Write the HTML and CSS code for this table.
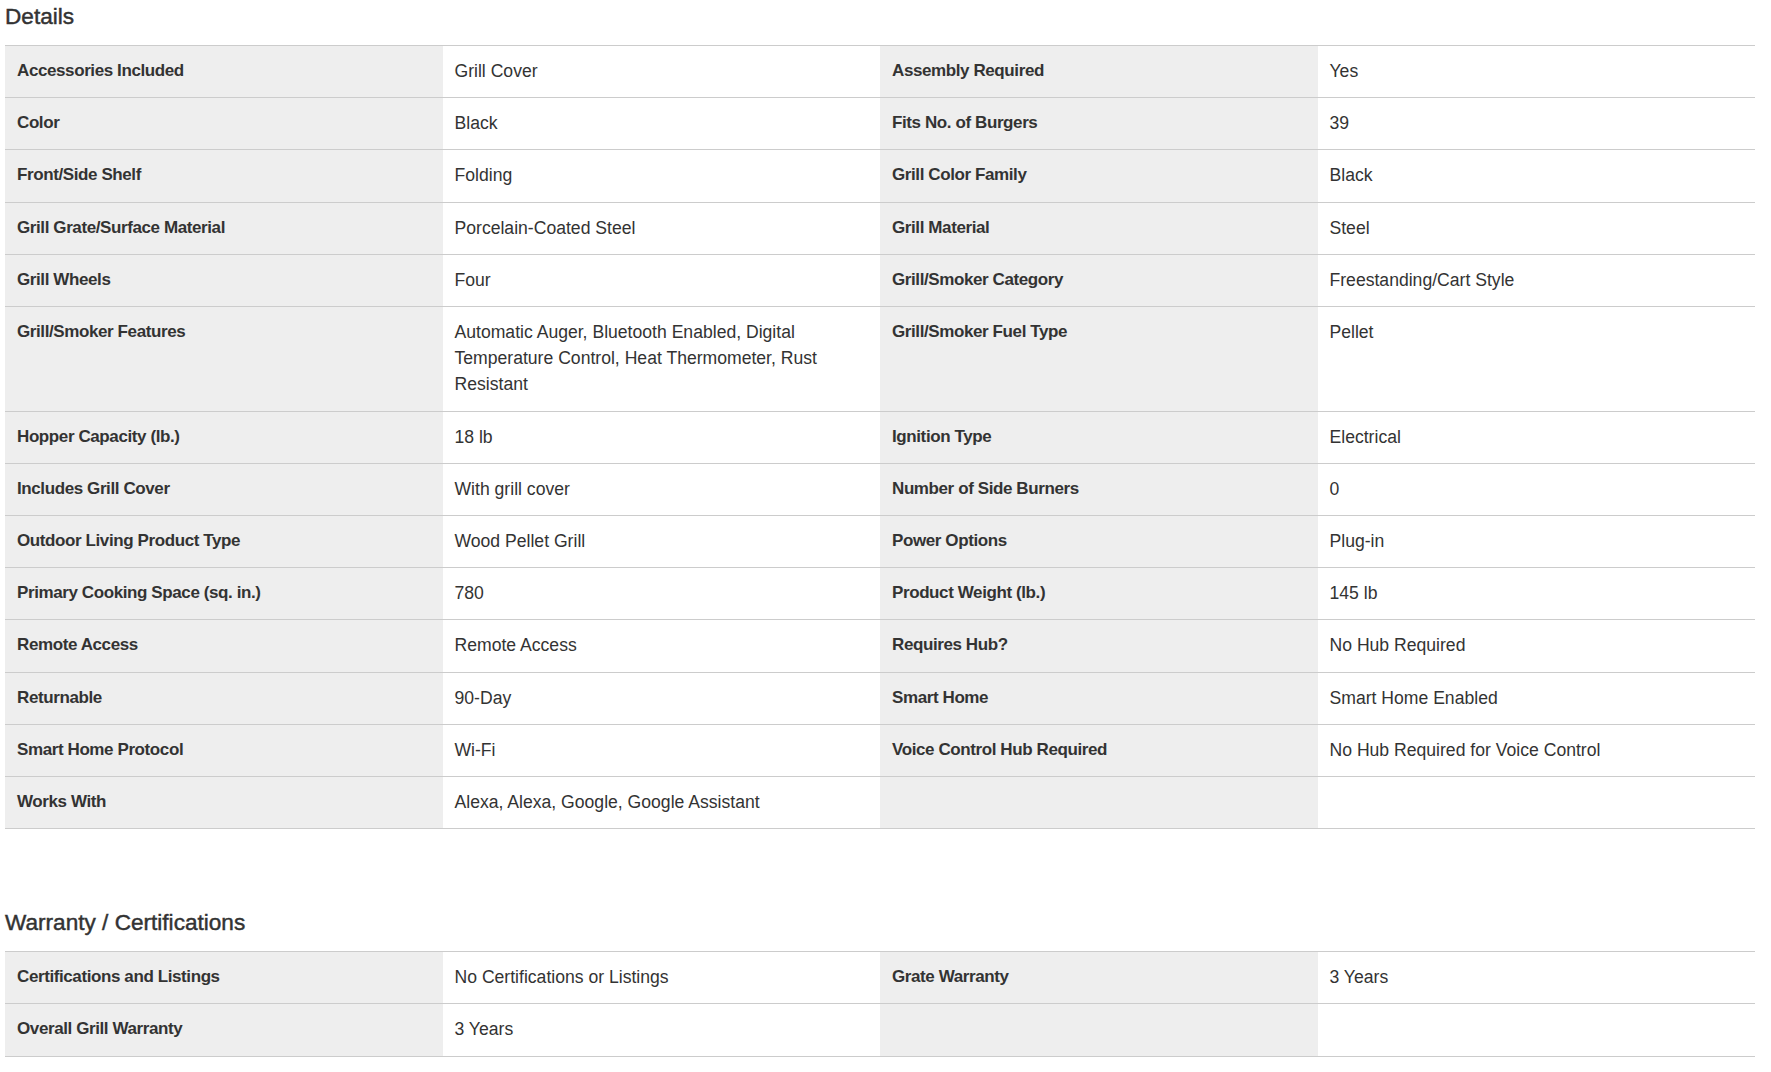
FILE: index.html
```html
<!DOCTYPE html>
<html lang="en">
<head>
<meta charset="utf-8">
<title>Specifications</title>
<link rel="stylesheet" href="styles.css">
</head>
<body>
<div class="page">
  <section class="section">
    <h2 class="section-title">Details</h2>
    <div class="spec-grid">
      <div class="spec-label">Accessories Included</div><div class="spec-value">Grill Cover</div>
      <div class="spec-label">Assembly Required</div><div class="spec-value">Yes</div>
      <div class="spec-label">Color</div><div class="spec-value">Black</div>
      <div class="spec-label">Fits No. of Burgers</div><div class="spec-value">39</div>
      <div class="spec-label">Front/Side Shelf</div><div class="spec-value">Folding</div>
      <div class="spec-label">Grill Color Family</div><div class="spec-value">Black</div>
      <div class="spec-label">Grill Grate/Surface Material</div><div class="spec-value">Porcelain-Coated Steel</div>
      <div class="spec-label">Grill Material</div><div class="spec-value">Steel</div>
      <div class="spec-label">Grill Wheels</div><div class="spec-value">Four</div>
      <div class="spec-label">Grill/Smoker Category</div><div class="spec-value">Freestanding/Cart Style</div>
      <div class="spec-label">Grill/Smoker Features</div><div class="spec-value">Automatic Auger, Bluetooth Enabled, Digital Temperature Control, Heat Thermometer, Rust Resistant</div>
      <div class="spec-label">Grill/Smoker Fuel Type</div><div class="spec-value">Pellet</div>
      <div class="spec-label">Hopper Capacity (lb.)</div><div class="spec-value">18 lb</div>
      <div class="spec-label">Ignition Type</div><div class="spec-value">Electrical</div>
      <div class="spec-label">Includes Grill Cover</div><div class="spec-value">With grill cover</div>
      <div class="spec-label">Number of Side Burners</div><div class="spec-value">0</div>
      <div class="spec-label">Outdoor Living Product Type</div><div class="spec-value">Wood Pellet Grill</div>
      <div class="spec-label">Power Options</div><div class="spec-value">Plug-in</div>
      <div class="spec-label">Primary Cooking Space (sq. in.)</div><div class="spec-value">780</div>
      <div class="spec-label">Product Weight (lb.)</div><div class="spec-value">145 lb</div>
      <div class="spec-label">Remote Access</div><div class="spec-value">Remote Access</div>
      <div class="spec-label">Requires Hub?</div><div class="spec-value">No Hub Required</div>
      <div class="spec-label">Returnable</div><div class="spec-value">90-Day</div>
      <div class="spec-label">Smart Home</div><div class="spec-value">Smart Home Enabled</div>
      <div class="spec-label">Smart Home Protocol</div><div class="spec-value">Wi-Fi</div>
      <div class="spec-label">Voice Control Hub Required</div><div class="spec-value">No Hub Required for Voice Control</div>
      <div class="spec-label">Works With</div><div class="spec-value">Alexa, Alexa, Google, Google Assistant</div>
      <div class="spec-label"></div><div class="spec-value"></div>
    </div>
  </section>
  <section class="section">
    <h2 class="section-title">Warranty / Certifications</h2>
    <div class="spec-grid">
      <div class="spec-label">Certifications and Listings</div><div class="spec-value">No Certifications or Listings</div>
      <div class="spec-label">Grate Warranty</div><div class="spec-value">3 Years</div>
      <div class="spec-label">Overall Grill Warranty</div><div class="spec-value">3 Years</div>
      <div class="spec-label"></div><div class="spec-value"></div>
    </div>
  </section>
</div>
</body>
</html>
```

FILE: styles.css
```css
html, body {
  margin: 0;
  padding: 0;
  background: #ffffff;
}

body {
  font-family: "Liberation Sans", Arial, Helvetica, sans-serif;
  color: #333333;
}

.page {
  padding: 0 16px 0 5px;
}

.section + .section {
  margin-top: 77px;
}

.section-title {
  margin: 0;
  padding: 0 0 12px 0;
  font-size: 22.6px;
  line-height: 33px;
  font-weight: normal;
  color: #333333;
  -webkit-text-stroke: 0.45px #333333;
}

.spec-grid {
  display: grid;
  grid-template-columns: repeat(4, 1fr);
  border-top: 1px solid #cccccc;
}

.spec-label,
.spec-value {
  padding: 12px 12px 13px 12px;
  line-height: 26.2px;
  border-bottom: 1px solid #cccccc;
  min-height: 26.2px;
}

.spec-label {
  background: #eeeeee;
  font-weight: bold;
  font-size: 17px;
  letter-spacing: -0.4px;
  color: #333333;
}

.spec-value {
  background: #ffffff;
  font-size: 17.6px;
  color: #333333;
  padding-right: 40px;
}
```
